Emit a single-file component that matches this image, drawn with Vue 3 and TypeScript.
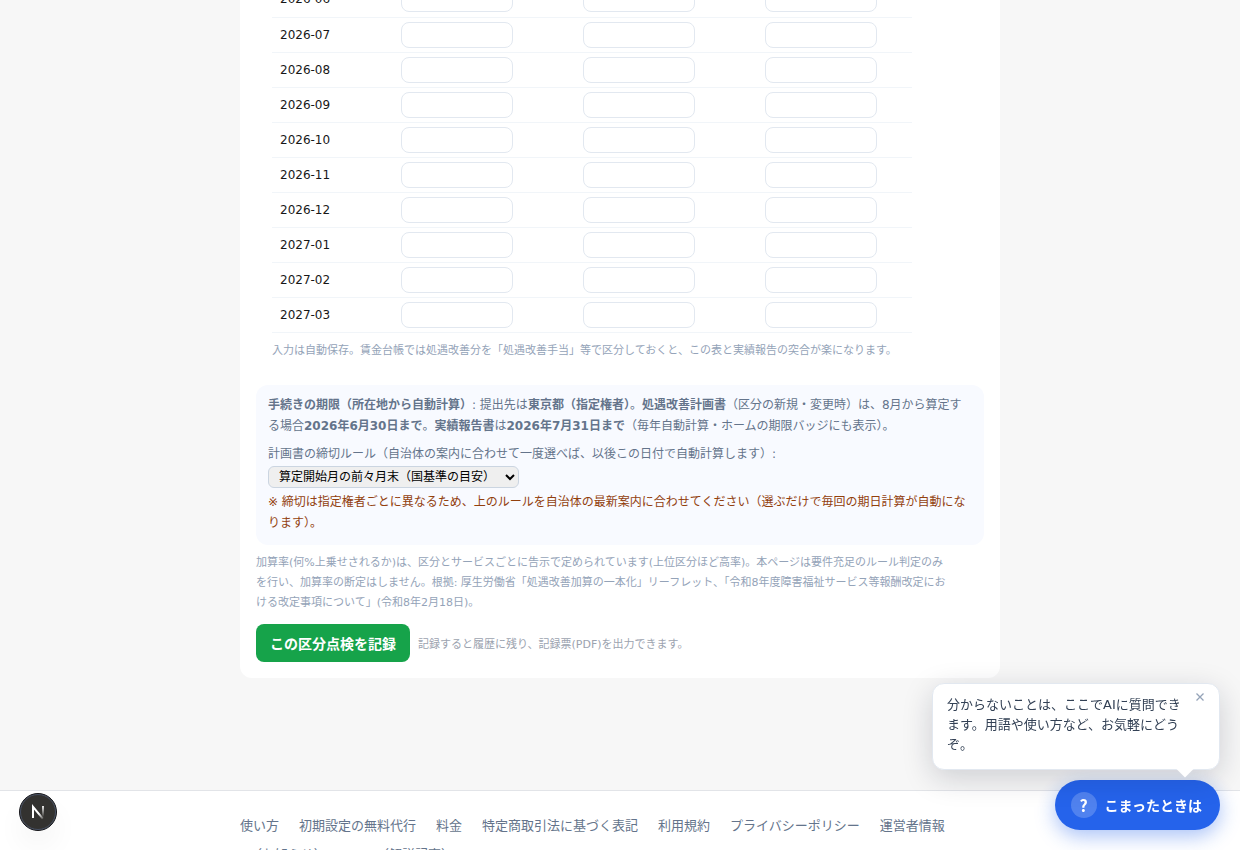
<script setup lang="ts">
import { ref } from 'vue'

interface MonthRow {
  month: string
  values: [string, string, string]
}

const columns = ['加算額', '賃金改善額', '差額']

const rows = ref<MonthRow[]>(
  [
    '2026-06',
    '2026-07',
    '2026-08',
    '2026-09',
    '2026-10',
    '2026-11',
    '2026-12',
    '2027-01',
    '2027-02',
    '2027-03',
  ].map((month) => ({ month, values: ['', '', ''] })),
)

const rule = ref('two-months-before')
const showHint = ref(true)

const footerLinks = [
  '使い方',
  '初期設定の無料代行',
  '料金',
  '特定商取引法に基づく表記',
  '利用規約',
  'プライバシーポリシー',
  '運営者情報',
  'X（お知らせ）',
  'note（解説記事）',
]
</script>

<template>
  <div class="viewport" lang="ja">
    <div class="page">
      <main class="card">
        <section class="ledger">
          <table>
            <colgroup>
              <col class="col-month" />
              <col class="col-value" />
              <col class="col-value" />
              <col />
            </colgroup>
            <tbody>
              <tr v-for="row in rows" :key="row.month">
                <th scope="row">{{ row.month }}</th>
                <td v-for="(name, i) in columns" :key="name">
                  <input
                    v-model="row.values[i]"
                    type="text"
                    inputmode="numeric"
                    :aria-label="`${row.month} ${name}`"
                  />
                </td>
              </tr>
            </tbody>
          </table>
          <p class="ledger-note">
            入力は自動保存。賃金台帳では処遇改善分を「処遇改善手当」等で区分しておくと、この表と実績報告の突合が楽になります。
          </p>
        </section>

        <section class="deadline">
          <p>
            <strong>手続きの期限（所在地から自動計算）</strong>: 提出先は<strong>東京都（指定権者）</strong>。<strong>処遇改善計画書</strong>（区分の新規・変更時）は、8月から算定する場合<strong>2026年6月30日まで</strong>。<strong>実績報告書</strong>は<strong>2026年7月31日まで</strong>（毎年自動計算・ホームの期限バッジにも表示）。
          </p>
          <div class="rule">
            <label for="rule">計画書の締切ルール（自治体の案内に合わせて一度選べば、以後この日付で自動計算します）:</label>
            <select id="rule" v-model="rule">
              <option value="two-months-before">算定開始月の前々月末（国基準の目安）</option>
            </select>
          </div>
          <p class="warning">
            ※ 締切は指定権者ごとに異なるため、上のルールを自治体の最新案内に合わせてください（選ぶだけで毎回の期日計算が自動になります）。
          </p>
        </section>

        <p class="basis">
          加算率(何%上乗せされるか)は、区分とサービスごとに告示で定められています(上位区分ほど高率)。本ページは要件充足のルール判定のみを行い、加算率の断定はしません。根拠: 厚生労働省「処遇改善加算の一本化」リーフレット、「令和8年度障害福祉サービス等報酬改定における改定事項について」(令和8年2月18日)。
        </p>

        <div class="actions">
          <button type="button" class="record">この区分点検を記録</button>
          <span class="record-note">記録すると履歴に残り、記録票(PDF)を出力できます。</span>
        </div>
      </main>

      <footer class="footer">
        <nav>
          <a v-for="link in footerLinks" :key="link" href="#">{{ link }}</a>
        </nav>
      </footer>
    </div>

    <button type="button" class="dev-badge" aria-label="開発ツール">
      <svg width="38" height="38" viewBox="0 0 38 38" fill="none" aria-hidden="true">
        <defs>
          <linearGradient id="diag" x1="21" y1="20" x2="25" y2="26" gradientUnits="userSpaceOnUse">
            <stop stop-color="#fff" />
            <stop offset="1" stop-color="#fff" stop-opacity="0.1" />
          </linearGradient>
          <linearGradient id="stem" x1="24" y1="13" x2="24" y2="24" gradientUnits="userSpaceOnUse">
            <stop stop-color="#fff" />
            <stop offset="1" stop-color="#fff" stop-opacity="0" />
          </linearGradient>
        </defs>
        <circle cx="19" cy="19" r="18.5" fill="#333230" stroke="#15161a" />
        <circle cx="19" cy="19" r="17.5" stroke="#475063" />
        <path d="M14 25V13.8l9.8 11.8" stroke="url(#diag)" stroke-width="2" />
        <path d="M24 13v11" stroke="url(#stem)" stroke-width="1.8" />
      </svg>
    </button>

    <aside class="help">
      <div v-if="showHint" class="hint">
        <p>分からないことは、ここでAIに質問できます。用語や使い方など、お気軽にどうぞ。</p>
        <button type="button" class="hint-close" aria-label="閉じる" @click="showHint = false">
          <svg width="8" height="8" viewBox="0 0 8 8" aria-hidden="true">
            <path d="M.5.5l7 7M7.5.5l-7 7" stroke="#94a3b8" stroke-width="1.3" />
          </svg>
        </button>
      </div>
      <button type="button" class="help-button">
        <span class="help-icon">?</span>
        <span>こまったときは</span>
      </button>
    </aside>
  </div>
</template>

<style>
body {
  margin: 0;
  background: #f7f7f7;
}
</style>

<style scoped>
* {
  box-sizing: border-box;
}

.viewport {
  height: 100vh;
  overflow: hidden;
  font-family: 'DejaVu Sans', 'Noto Sans CJK JP', sans-serif;
  color: #171717;
}

/* The page rests scrolled to the second month of the table. */
.page {
  margin-top: -18px;
}

p {
  margin: 0;
}

.card {
  max-width: 760px;
  margin: 0 auto;
  padding: 0 16px 16px;
  border-radius: 0 0 12px 12px;
  background: #fff;
}

.ledger {
  padding: 0 16px;
}

table {
  width: 100%;
  max-width: 640px;
  border-collapse: collapse;
  table-layout: fixed;
  font-size: 12px;
}

.col-month {
  width: 121px;
}

.col-value {
  width: 182px;
}

tr {
  border-bottom: 1px solid #f1f5f9;
}

th,
td {
  height: 35px;
  padding: 4px 8px;
  text-align: left;
  font-weight: 400;
}

input {
  display: block;
  width: 112px;
  height: 26px;
  padding: 4px 8px;
  border: 1px solid #e2e8f0;
  border-radius: 8px;
  background: #fff;
  font: inherit;
  text-align: right;
}

.ledger-note {
  margin-top: 9px;
  font-size: 11px;
  line-height: 18px;
  color: #94a3b8;
}

.deadline {
  margin-top: 25px;
  padding: 10px 12px 11px;
  border-radius: 12px;
  background: #f8faff;
  font-size: 12px;
  line-height: 21px;
  color: #64748b;
}

.rule {
  display: flex;
  flex-direction: column;
  align-items: flex-start;
  gap: 1px;
  margin: 7px 0 4px;
}

select {
  height: 22px;
  padding: 0 6px;
  border: 1px solid #cbd5e1;
  border-radius: 6px;
  background-color: #efefef;
  font: inherit;
  font-size: 12px;
  color: #000;
}

.warning {
  color: #92400e;
}

.basis {
  margin-top: 8px;
  padding-right: 32px;
  font-size: 11px;
  line-height: 20px;
  color: #94a3b8;
}

.actions {
  display: flex;
  align-items: center;
  gap: 8px;
  margin-top: 11px;
}

.record {
  height: 38px;
  padding: 0 14px;
  border: 0;
  border-radius: 8px;
  background: #16a34a;
  font: inherit;
  font-size: 14px;
  font-weight: 700;
  color: #fff;
}

.record-note {
  font-size: 11px;
  color: #9ca3af;
}

.footer {
  margin-top: 112px;
  padding: 24px 16px;
  border-top: 1px solid #e2e4e8;
  background: #fff;
}

nav {
  display: flex;
  flex-wrap: wrap;
  gap: 8px 20px;
  max-width: 760px;
  margin: 0 auto;
}

nav a {
  font-size: 13px;
  line-height: 21px;
  color: #64748b;
  text-decoration: none;
}

.dev-badge {
  position: fixed;
  left: 19px;
  bottom: 19px;
  width: 38px;
  height: 38px;
  padding: 0;
  border: 0;
  border-radius: 50%;
  background: transparent;
  box-shadow: 0 16px 32px -8px rgba(0, 0, 0, 0.12);
}

.dev-badge svg {
  display: block;
}

.help {
  position: fixed;
  right: 20px;
  bottom: 20px;
  display: flex;
  flex-direction: column;
  align-items: flex-end;
  gap: 10px;
}

.hint {
  position: relative;
  z-index: 1;
  width: 288px;
  padding: 11px 36px 14px 14px;
  border: 1px solid #e2e8f0;
  border-radius: 12px;
  background: #fff;
  box-shadow: 0 8px 30px rgba(15, 23, 42, 0.18);
  font-size: 13px;
  line-height: 20px;
  color: #334155;
}

.hint::after {
  content: '';
  position: absolute;
  right: 28px;
  bottom: -6px;
  width: 12px;
  height: 12px;
  background: #fff;
  transform: rotate(45deg);
}

.hint-close {
  position: absolute;
  top: 3px;
  right: 9px;
  display: grid;
  place-items: center;
  width: 20px;
  height: 20px;
  padding: 0;
  border: 0;
  background: transparent;
}

.help-button {
  display: flex;
  align-items: center;
  gap: 8px;
  height: 50px;
  padding: 0 18px 0 16px;
  border: 0;
  border-radius: 25px;
  background: #2563eb;
  box-shadow: 0 6px 20px rgba(37, 99, 235, 0.4);
  font: inherit;
  font-size: 14px;
  font-weight: 700;
  color: #fff;
}

.help-icon {
  display: grid;
  place-items: center;
  width: 26px;
  height: 26px;
  border-radius: 50%;
  background: rgba(255, 255, 255, 0.2);
  font-family: 'Noto Sans CJK JP', sans-serif;
  font-size: 16px;
  line-height: 26px;
}
</style>
